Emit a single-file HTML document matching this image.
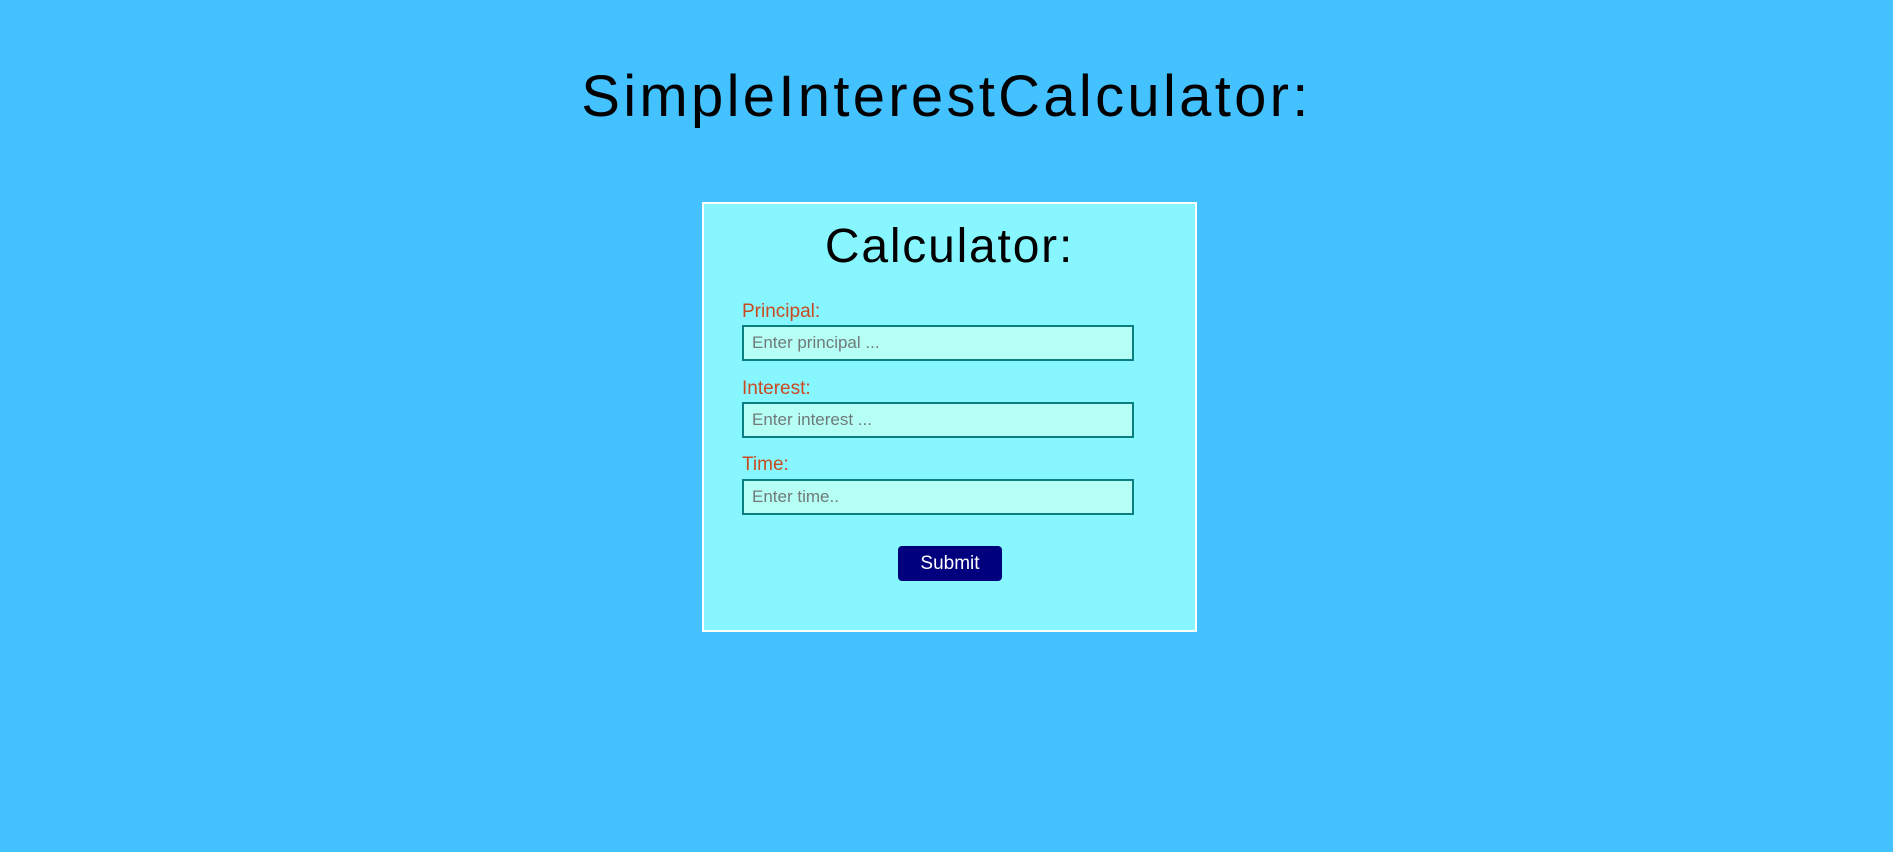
<!DOCTYPE html>
<html><head><meta charset="utf-8"><style>
html,body{margin:0;padding:0;width:1893px;height:852px;background:#43c2ff;overflow:hidden;font-family:"Liberation Sans",sans-serif;}
.t{position:absolute;left:0;width:1893px;top:62px;text-align:center;font-size:58px;letter-spacing:3.3px;color:#000;line-height:70px;}
.box{position:absolute;left:702px;top:202px;width:491px;height:426px;border:2px solid #fff;background:#87f6ff;}
.h{position:absolute;left:0;width:100%;top:15px;text-align:center;font-size:48px;line-height:56px;color:#000;letter-spacing:1.8px;}
.l{position:absolute;left:38px;font-size:19px;color:#c94a1f;line-height:22px;}
.i{position:absolute;left:38px;border:2px solid #0a7f7f;background:#b6fff4;box-sizing:border-box;width:392px;height:36px;font-size:17px;color:#707a78;line-height:32px;padding-left:8px;}
.b{position:absolute;left:194px;top:342px;width:104px;height:35px;background:#00007f;border-radius:4px;color:#fff;font-size:19px;text-align:center;line-height:35px;}
</style></head><body>
<div class="t">SimpleInterestCalculator:</div>
<div class="box">
<div class="h">Calculator:</div>
<div class="l" style="top:97px">Principal:</div>
<div class="i" style="top:121px">Enter principal ...</div>
<div class="l" style="top:174px">Interest:</div>
<div class="i" style="top:198px">Enter interest ...</div>
<div class="l" style="top:250px">Time:</div>
<div class="i" style="top:275px">Enter time..</div>
<div class="b">Submit</div>
</div>
</body></html>
